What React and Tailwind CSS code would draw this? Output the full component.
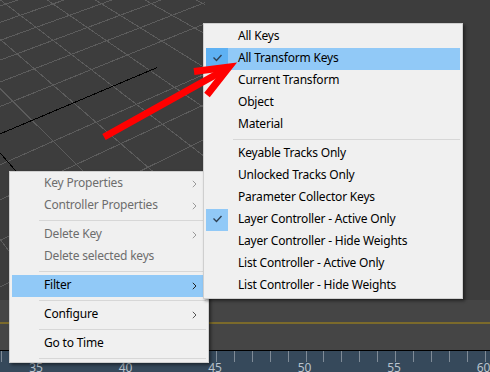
import React from 'react';

// perspective for the home grid: two vanishing points and the origin
const V1 = [1500, -500];
const V2 = [-400, -307];
const O = [-12, 139];
const KA = 0.03;
const KB = 0.048;

function project(u, v) {
    const w = 1 + KA * u + KB * v;
    return [
        (KA * u * V1[0] + KB * v * V2[0] + O[0]) / w,
        (KA * u * V1[1] + KB * v * V2[1] + O[1]) / w,
    ];
}

function gridLines() {
    const lines = [];
    for (let u = -15; u <= 50; u++) {
        if (u === 0) continue;
        const vMin = Math.max(-30, (0.2 - 1 - KA * u) / KB);
        lines.push([project(u, vMin), project(u, 30)]);
    }
    for (let v = -30; v <= 25; v++) {
        if (v === 0) continue;
        const uMin = Math.max(-30, (0.2 - 1 - KB * v) / KA);
        lines.push([project(uMin, v), project(60, v)]);
    }
    return lines;
}

const filterItems = [
    { label: 'All Keys' },
    { label: 'All Transform Keys', checked: true, active: true },
    { label: 'Current Transform' },
    { label: 'Object' },
    { label: 'Material' },
    { sep: true },
    { label: 'Keyable Tracks Only' },
    { label: 'Unlocked Tracks Only' },
    { label: 'Parameter Collector Keys' },
    { label: 'Layer Controller - Active Only', checked: true },
    { label: 'Layer Controller - Hide Weights' },
    { label: 'List Controller - Active Only' },
    { label: 'List Controller - Hide Weights' },
];

const trackItems = [
    { label: 'Key Properties', disabled: true, sub: true },
    { label: 'Controller Properties', disabled: true, sub: true },
    { sep: true },
    { label: 'Delete Key', disabled: true, sub: true },
    { label: 'Delete selected keys', disabled: true },
    { sep: true },
    { label: 'Filter', sub: true, active: true },
    { sep: true },
    { label: 'Configure', sub: true },
    { sep: true },
    { label: 'Go to Time' },
    { sep: true },
];

function Viewport() {
    const lines = gridLines();
    const a0 = project(0, 0);
    const a1 = project(4.2, 0);
    const b1 = project(0, -12);

    // the home grid only reaches the left part of the view
    return (
        <div className="h-[300px] overflow-hidden">
            <svg width="205" height="300" className="block" shapeRendering="crispEdges">
                {lines.map(([p, q], i) => (
                    <line key={i} x1={p[0]} y1={p[1]} x2={q[0]} y2={q[1]} stroke="#5c5c5c" strokeWidth="1" />
                ))}
                <line x1={a0[0]} y1={a0[1]} x2={a1[0]} y2={a1[1]} stroke="#000" strokeWidth="1" />
                <line x1={a0[0]} y1={a0[1]} x2={b1[0]} y2={b1[1]} stroke="#000" strokeWidth="1" />
            </svg>
        </div>
    );
}

function Ruler() {
    const frameX = (f) => 216 + (f - 45) * 17.9;
    const frames = [];
    for (let f = 33; f <= 61; f++) frames.push(f);
    const labels = [35, 40, 45, 50, 55, 60];

    return (
        <div className="relative h-[22px] border-t border-black bg-[#36495b]">
            <svg width="490" height="21" className="absolute left-0 top-0" shapeRendering="crispEdges">
                {frames.map((f) => (
                    <line key={f} x1={Math.round(frameX(f)) + 0.5} y1="0" x2={Math.round(frameX(f)) + 0.5} y2="11" stroke="#7f8b97" strokeWidth="1" />
                ))}
            </svg>
            {labels.map((f) => (
                <span
                    key={f}
                    className="absolute top-[11px] -translate-x-1/2 text-[12px] leading-[12px] text-[#b9c3cd]"
                    style={{ left: frameX(f) - 1 }}
                >
                    {f}
                </span>
            ))}
        </div>
    );
}

function Check() {
    return (
        <svg width="22" height="22" viewBox="0 0 22 22">
            <path d="M7.5 9.5 L10.5 12.5 L15.5 7" fill="none" stroke="#2f4154" strokeWidth="1.4" />
        </svg>
    );
}

function Chevron({ className }) {
    return (
        <svg width="5" height="8" viewBox="0 0 5 8" className={className}>
            <path d="M0.8 0.8 L4 4 L0.8 7.2" fill="none" stroke="currentColor" strokeWidth="1" />
        </svg>
    );
}

function MenuRow({ item }) {
    if (item.sep) {
        return (
            <div className="h-[7px] pl-[27px] pt-[3px]">
                <div className="h-px bg-[#d7d7d7]" />
            </div>
        );
    }

    return (
        <div className={`flex h-[22px] ${item.active ? 'bg-[#91c9f7]' : ''}`}>
            <div
                className={`flex w-[22px] items-center justify-center ${
                    item.checked ? (item.active ? 'bg-[#5eb1f3]' : 'bg-[#91c9f7]') : ''
                }`}
            >
                {item.checked ? <Check /> : null}
            </div>
            <div
                className={`flex flex-1 items-center pb-[2px] pl-[10px] leading-[20px] tracking-[-0.2px] ${
                    item.disabled ? 'text-[#6d6d6d]' : 'text-black'
                }`}
            >
                {item.label}
            </div>
            {item.sub ? (
                <div className="flex items-center pr-[9px]">
                    <Chevron className={item.disabled ? 'text-[#9a9a9a]' : item.active ? 'text-[#222]' : 'text-[#555]'} />
                </div>
            ) : null}
        </div>
    );
}

function Menu({ items, className }) {
    return (
        <div
            className={`absolute border border-[#cfcfcf] bg-[#f0f0f0] px-[2px] shadow-[2px_2px_3px_rgba(0,0,0,0.45)] ${className}`}
        >
            {items.map((item, i) => (
                <MenuRow key={i} item={item} />
            ))}
        </div>
    );
}

function Arrow() {
    return (
        <svg width="490" height="372" className="pointer-events-none absolute left-0 top-0">
            <line x1="104" y1="137" x2="226" y2="69" stroke="#ff0000" strokeWidth="7" />
            <polyline points="194,71.5 229,67 207,95" fill="none" stroke="#ff0000" strokeWidth="7" strokeLinejoin="miter" />
        </svg>
    );
}

export default function App() {
    return (
        <div className="relative flex h-[372px] w-[490px] flex-col overflow-hidden bg-[#3d3d3d] font-['Noto_Sans',sans-serif] text-[12px]">
            <Viewport />
            <div className="h-[50px] bg-[#454545] pt-[22px]">
                <div className="h-[2px] bg-[#7b6a2b]" />
            </div>
            <Ruler />

            <Menu items={trackItems} className="left-[9px] top-[171px] w-[200px] pt-px" />
            <Menu items={filterItems} className="left-[203px] top-[23px] w-[260px] pb-[1px] pt-[2px]" />
            <Arrow />
        </div>
    );
}
